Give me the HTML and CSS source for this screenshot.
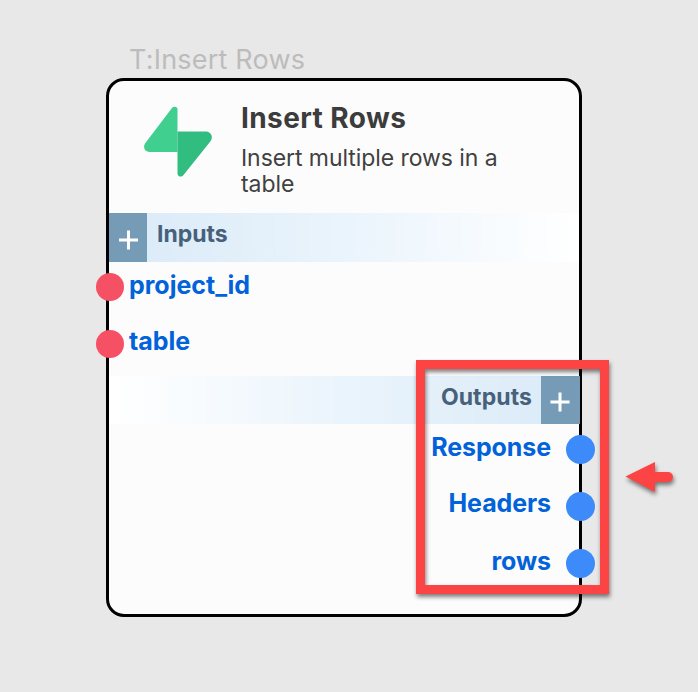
FILE: index.html
```
<!DOCTYPE html>
<html lang="en">
<head>
<meta charset="utf-8">
<title>Insert Rows</title>
<link rel="stylesheet" href="styles.css">
</head>
<body>
<main class="canvas">
  <div class="node-label"><span>T:Insert Rows</span></div>
  <section class="node">
    <header class="head">
      <svg class="logo" viewBox="0 0 70 72">
        <path fill="#40cf8e" d="M34.5 3V46H6.500C2 46-0.500 41.500 2.200 37.300L28.800 2.300C31 -0.400 34.500 0.700 34.500 3Z"/>
        <path fill="#30bd7f" d="M34.500 25.500H62.500C68 25.500 70.700 31 67.500 35.200L40.500 69C38.500 71.800 34.500 70.700 34.500 67.500Z"/>
      </svg>
      <div class="head-text">
        <h1><span>Insert Rows</span></h1>
        <p><span>Insert multiple rows in a table</span></p>
      </div>
    </header>
    <div class="bar inputs">
      <svg class="plus" viewBox="0 0 38 49"><path d="M10 27H29M19.500 17.500V36.500"/></svg>
      <h2><span>Inputs</span></h2>
    </div>
    <ul class="ports in">
      <li><i class="dot"></i><span>project_id</span></li>
      <li><i class="dot"></i><span>table</span></li>
    </ul>
    <div class="bar outputs">
      <h2><span>Outputs</span></h2>
      <svg class="plus" viewBox="0 0 39 48"><path d="M9.500 26H28.500M19 16.500V35.500"/></svg>
    </div>
    <ul class="ports out">
      <li><span>Response</span><i class="dot"></i></li>
      <li><span>Headers</span><i class="dot"></i></li>
      <li><span>rows</span><i class="dot"></i></li>
    </ul>
  </section>
  <div class="highlight"></div>
  <svg class="arrow" viewBox="0 0 60 46"><path d="M5.500 16.500L35 2V12H48A5 5 0 0 1 48 22H35V32Z"/></svg>
</main>
</body>
</html>
```
FILE: styles.css
```
* { box-sizing: border-box; margin: 0; padding: 0; }
body { background: #e8e8e8; font-family: Inter, "Liberation Sans", sans-serif; }
.canvas {
  position: relative;
  width: 698px;
  height: 692px;
  padding: 42px 0 0 106px;
  overflow: hidden;
}
.node-label {
  height: 36px;
  padding-left: 23px;
  font-size: 27px;
  line-height: 36px;
  letter-spacing: .2px;
  color: #bcbcbc;
}
.node {
  width: 476px;
  height: 539px;
  border: 3px solid #000;
  border-radius: 18px;
  background: #fcfcfc;
}
.head { display: flex; height: 132px; }
.logo { width: 70px; height: 72px; margin: 25px 0 0 34px; }
.head-text { width: 290px; margin-left: 28px; }
.head h1 { margin-top: 20px; font-size: 28px; line-height: 34px; font-weight: 700; letter-spacing: .4px; color: #3c3c3c; }
.head p { margin-top: 10px; font-size: 23px; line-height: 26px; letter-spacing: -.07px; color: #414141; }
.bar { display: flex; }
.bar h2 { font-size: 23px; line-height: 28px; font-weight: 700; color: #47617b; }
.inputs { height: 49px; background: linear-gradient(to right, #d9eaf7, #eaf4fc 50%, #fff); }
.outputs { height: 48px; justify-content: flex-end; margin-right: -1px; background: linear-gradient(to left, #d9eaf7, #eaf4fc 50%, #fff); }
.inputs h2 { margin: 7px 0 0 10px; }
.outputs h2 { margin: 7px 9px 0 0; letter-spacing: .1px; }
.plus { width: 38px; height: 100%; background: #769bb7; fill: none; stroke: #fff; stroke-width: 3; }
.outputs .plus { width: 39px; }
.ports { list-style: none; font-size: 25px; font-weight: 700; color: #0262d9; }
.ports li { display: flex; align-items: center; height: 57px; padding-bottom: 7px; }
.ports span { margin-bottom: 4px; }
.in { height: 114px; }
.out { margin-right: -1px; }
.out li { justify-content: flex-end; }
.out li:nth-child(2) span,
.in li:nth-child(2) span { margin-bottom: 6px; }
.in .dot { width: 28px; height: 28px; margin: 0 5px 0 -13px; border-radius: 50%; background: #f55064; }
.out .dot { width: 29px; height: 29px; margin: 0 -15px 0 15px; border-radius: 50%; background: #3d8bfa; }
.out span { letter-spacing: -.1px; }
.highlight {
  position: absolute;
  left: 416px;
  top: 360px;
  width: 193px;
  height: 234px;
  border: 9px solid #fd4444;
  filter: drop-shadow(1px 3px 2px rgba(0, 0, 0, .5));
}
.arrow {
  position: absolute;
  left: 620px;
  top: 460px;
  width: 60px;
  height: 46px;
  fill: #fd4444;
  filter: drop-shadow(1px 3px 2px rgba(0, 0, 0, .5));
}
```
